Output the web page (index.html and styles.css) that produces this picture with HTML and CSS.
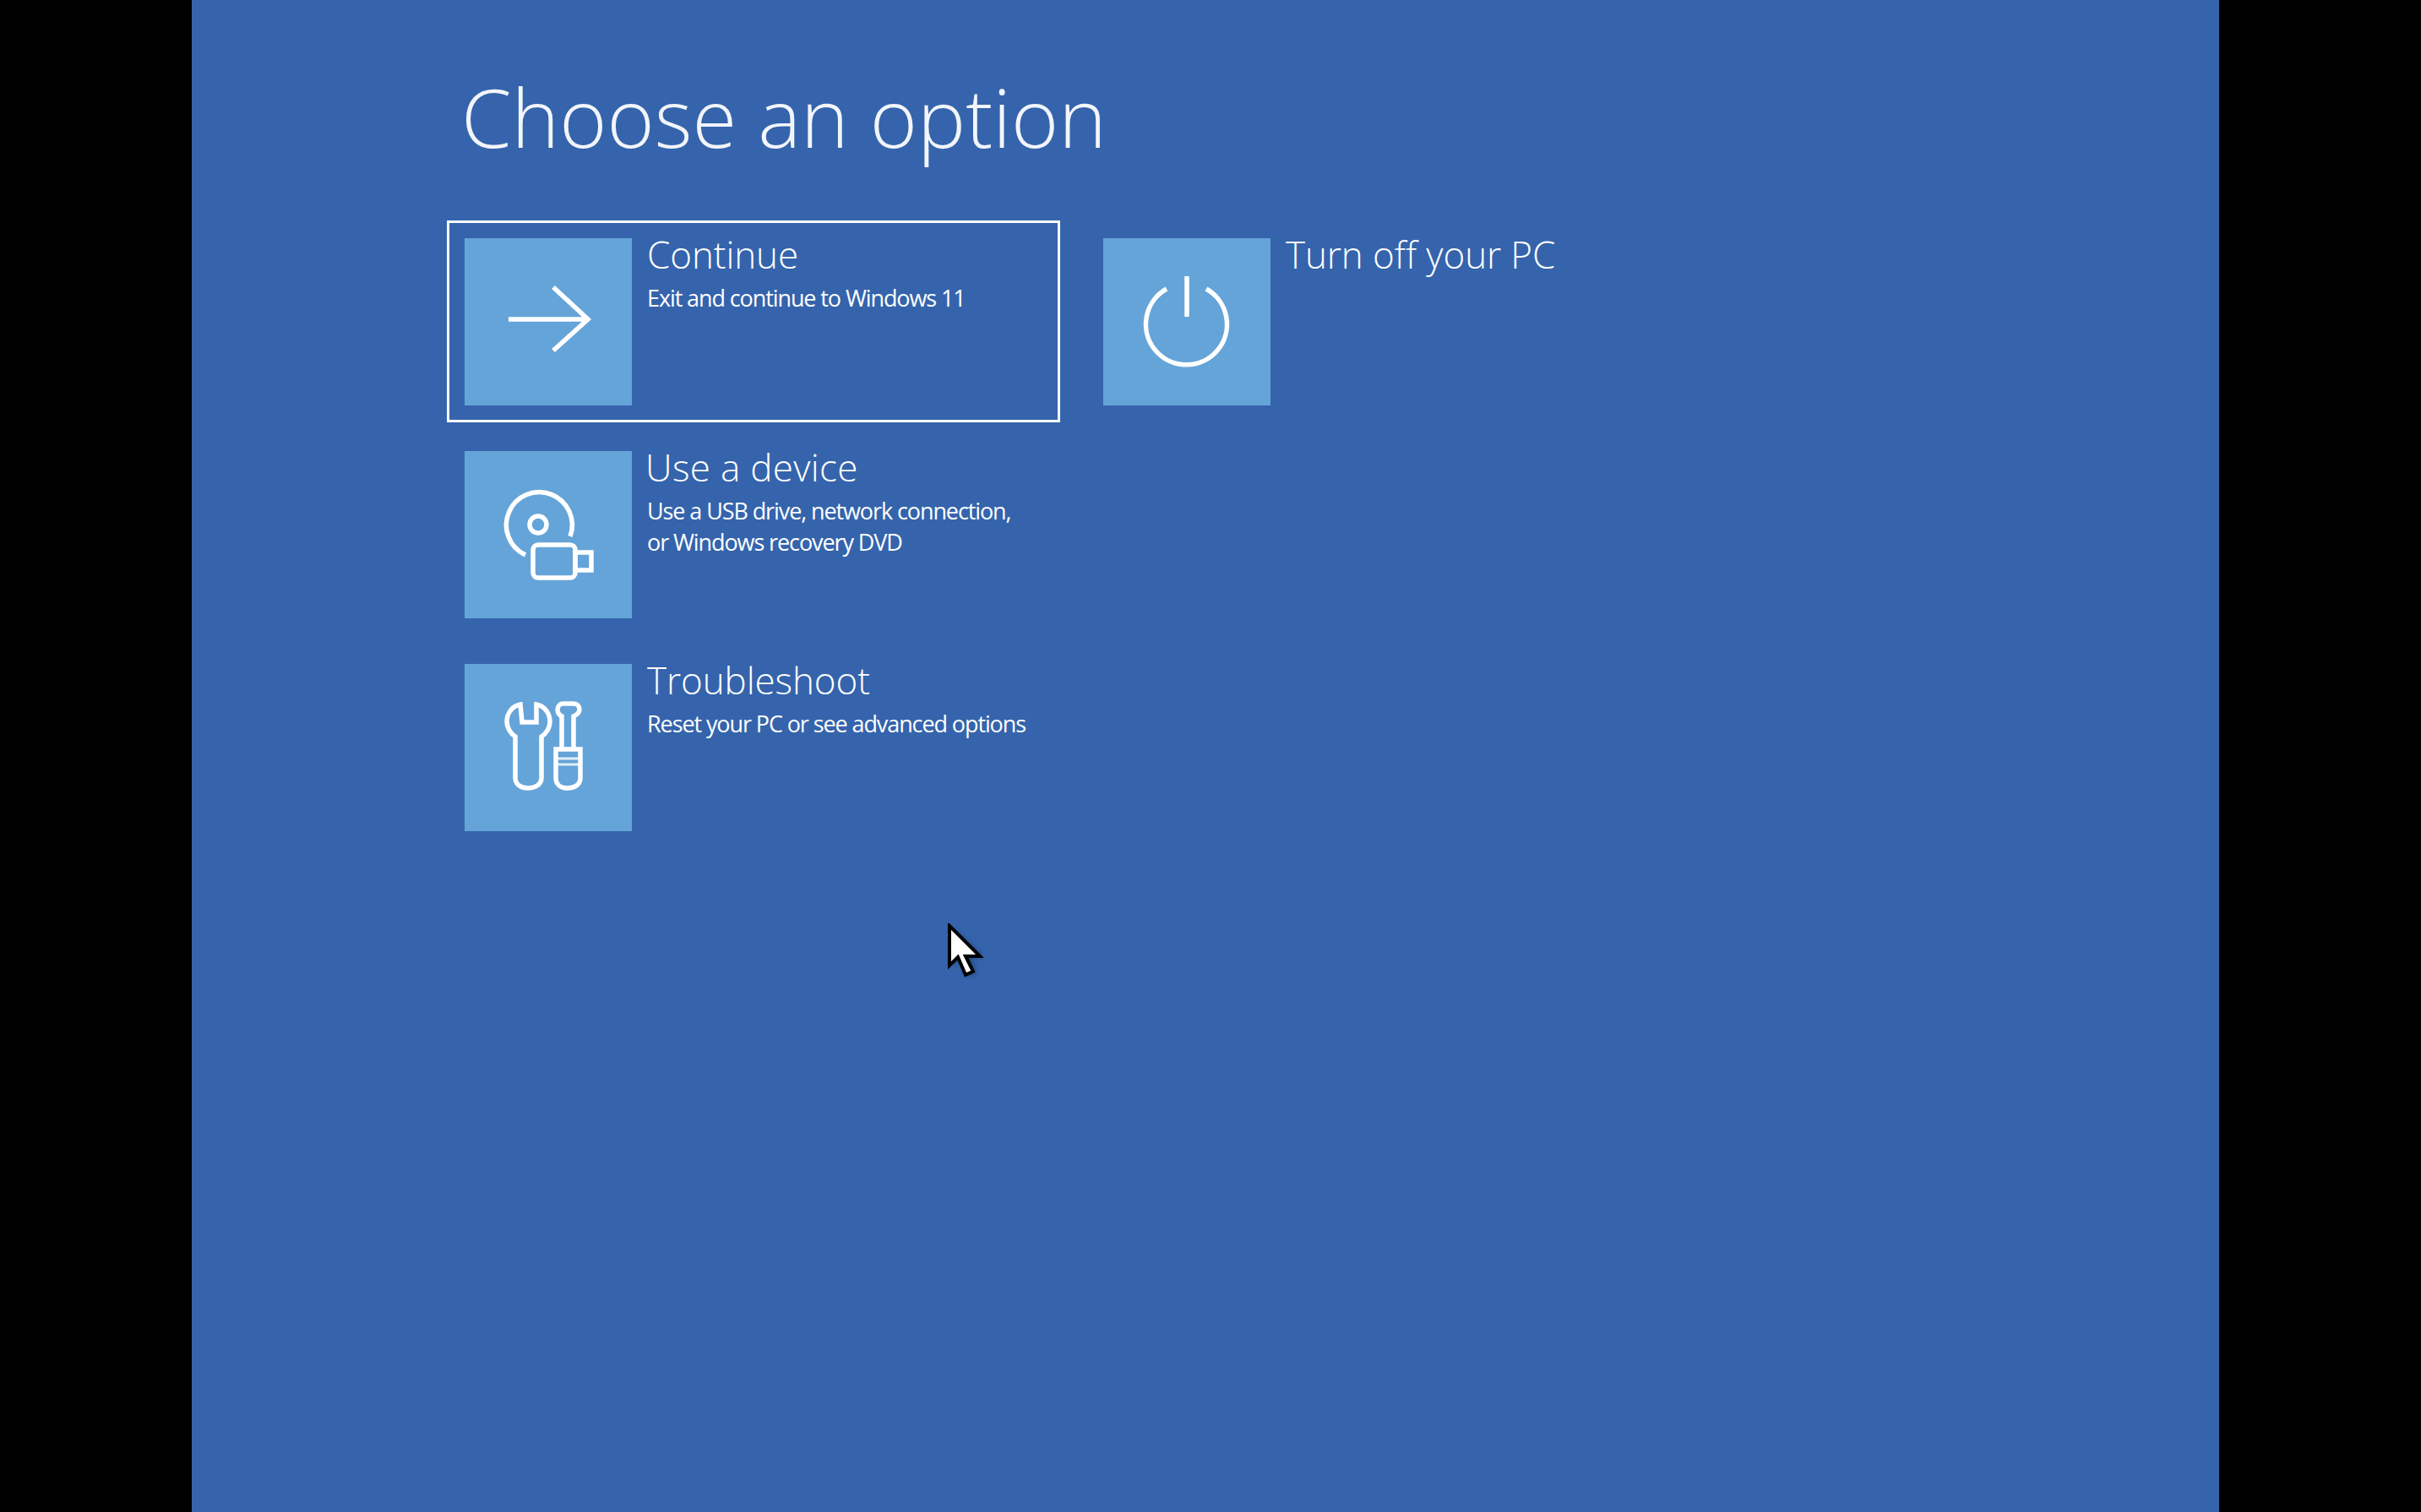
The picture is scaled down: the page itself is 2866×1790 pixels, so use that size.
FILE: index.html
```html
<!DOCTYPE html>
<html lang="en">
<head>
    <meta charset="UTF-8">
    <title>Choose an option</title>
    <link rel="stylesheet" href="styles.css">
</head>
<body>
    <main class="screen">
        <h1>Choose an option</h1>
        <div class="options">
            <div class="column">
                <div class="option focused">
                    <div class="tile">
                        <svg viewBox="0 0 198 198"><path d="M52 96H146M105 58L146 96L105 133"/></svg>
                    </div>
                    <div class="text">
                        <h2>Continue</h2>
                        <p>Exit and continue to Windows 11</p>
                    </div>
                </div>
                <div class="option">
                    <div class="tile">
                        <svg viewBox="0 0 198 198">
                            <path d="M125 101A39 39 0 1 0 72 123"/>
                            <circle cx="87" cy="87" r="10"/>
                            <rect x="81" y="111" width="50" height="39" rx="6"/>
                            <rect x="131" y="120" width="19" height="21"/>
                        </svg>
                    </div>
                    <div class="text">
                        <h2 class="nudge">Use a device</h2>
                        <p>Use a USB drive, network connection,<br>or Windows recovery DVD</p>
                    </div>
                </div>
                <div class="option">
                    <div class="tile">
                        <svg viewBox="0 0 198 198">
                            <path d="M66 48C55 50 50 60 50 68C50 76 55 83 60 86V135C60 143 67 147 75 147C83 147 91 143 91 135V86C96 83 101 76 101 68C101 60 96 50 85 48V69H68Z"/>
                            <path d="M115 101V62C111 60 110 56 110 54C110 50 113 47 116 47H129C133 47 136 50 136 54C136 57 133 60 129 62V101"/>
                            <path d="M108 101H137V135C137 143 130 147 122 147C114 147 108 143 108 135Z"/>
                            <path class="band" d="M108 112H137M108 119H137"/>
                        </svg>
                    </div>
                    <div class="text">
                        <h2>Troubleshoot</h2>
                        <p>Reset your PC or see advanced options</p>
                    </div>
                </div>
            </div>
            <div class="column">
                <div class="option">
                    <div class="tile">
                        <svg viewBox="0 0 198 198">
                            <path d="M99 45V93"/>
                            <path d="M75 60A48 48 0 1 0 122 60"/>
                        </svg>
                    </div>
                    <div class="text">
                        <h2>Turn off your PC</h2>
                    </div>
                </div>
            </div>
        </div>
        <svg class="cursor" viewBox="0 0 44 68">
            <path class="cursor-shadow" d="M6 6V50L16 41L25 62L34 58L26 40H42Z"/>
            <path class="cursor-arrow" d="M3 3V50L13 40L22 61L31 57L22 39H39Z"/>
        </svg>
    </main>
</body>
</html>
```

FILE: styles.css
```css
html, body {
    height: 100%;
}

body {
    margin: 0;
    padding-left: 227px;
    background-color: #000;
    font-family: "Open Sans", "Liberation Sans", sans-serif;
    color: #fff;
    overflow: hidden;
}

.screen {
    position: relative;
    box-sizing: border-box;
    width: 2400px;
    height: 100%;
    padding: 85px 0 0 323px;
    background-color: #3564ac;
}

h1 {
    margin: 0 0 92px -4px;
    height: 105px;
    font-size: 96px;
    font-weight: 300;
    line-height: 105px;
    color: #f2f5fa;
}

.options {
    display: flex;
}

.column {
    width: 756px;
    display: flex;
    flex-direction: column;
    gap: 54px;
}

.option {
    position: relative;
    display: flex;
    gap: 18px;
    height: 198px;
}

.focused::after {
    content: "";
    position: absolute;
    left: -21px;
    top: -21px;
    width: 720px;
    height: 233px;
    border: 3px solid #fff;
}

.tile {
    flex: none;
    width: 198px;
    height: 198px;
    background-color: #65a4d9;
}

.tile svg {
    display: block;
    width: 198px;
    height: 198px;
    fill: none;
    stroke: #fff;
    stroke-width: 5.5;
}

.tile .band {
    stroke-width: 3;
    opacity: 0.8;
}

h2 {
    margin: -3px 0 12px;
    font-size: 44px;
    font-weight: 300;
    line-height: 44px;
    letter-spacing: -0.1px;
    white-space: nowrap;
}

h2.nudge {
    margin-left: -2px;
    letter-spacing: 0.3px;
}

p {
    margin: 0;
    font-size: 27px;
    line-height: 36.5px;
    letter-spacing: -1.1px;
    white-space: nowrap;
}

.cursor {
    position: absolute;
    left: 894px;
    top: 1093px;
    width: 44px;
    height: 68px;
}

.cursor-shadow {
    fill: rgba(0, 0, 0, 0.45);
    filter: blur(3px);
}

.cursor-arrow {
    fill: #fff;
    stroke: #000;
    stroke-width: 4;
}
```
